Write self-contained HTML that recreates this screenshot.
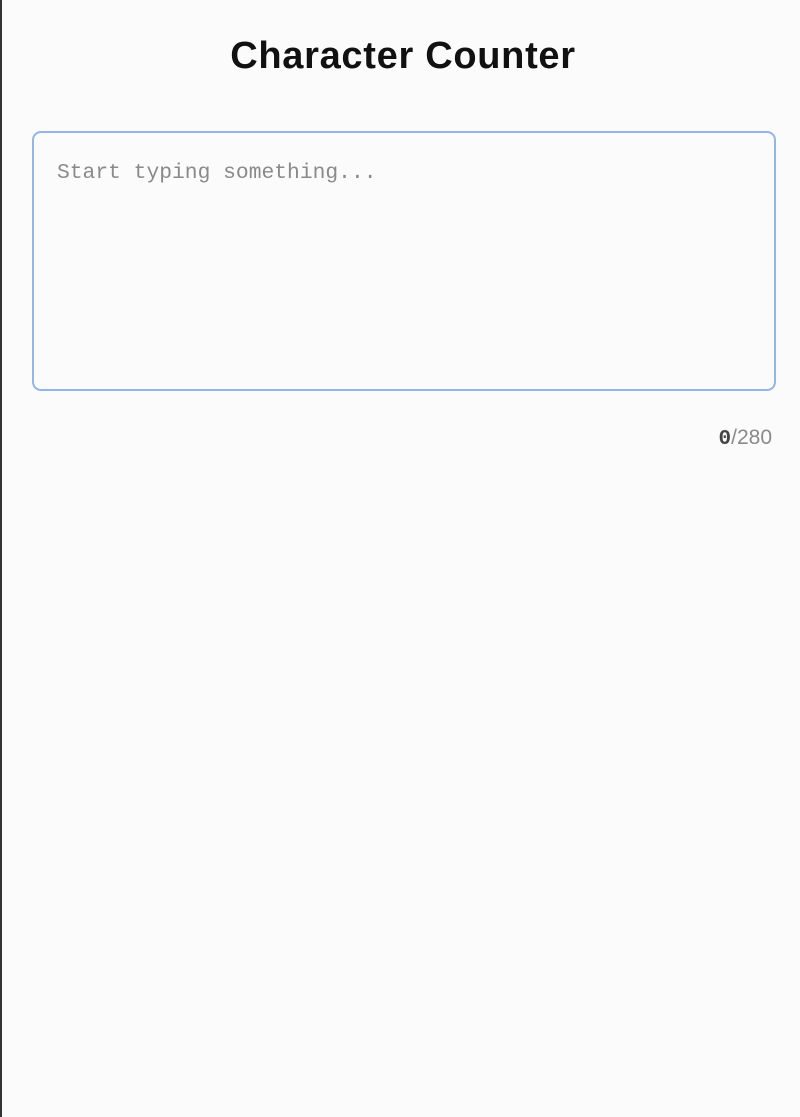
<!DOCTYPE html>
<html><head><style>
html,body{margin:0;padding:0;}
body{width:800px;height:1117px;background:#fbfbfb;position:relative;overflow:hidden;font-family:"Liberation Sans",sans-serif;}
.lb{position:absolute;left:0;top:0;width:2px;height:1117px;background:#333;}
h1{position:absolute;left:0;width:806px;top:34px;margin:0;text-align:center;font-size:38px;font-weight:bold;color:#111;letter-spacing:0.7px;line-height:44px;}
.ta{position:absolute;left:32px;top:131px;width:740px;height:256px;border:2px solid #93b5ea;border-radius:9px;background:#fbfbfb;}
.ph{position:absolute;left:23px;top:28px;font-family:"Liberation Mono",monospace;font-size:21.3px;color:#8a8a8a;}
.cnt{position:absolute;right:28px;top:426px;font-size:21px;color:#8a8a8a;}
.cnt b{font-family:"Liberation Mono",monospace;color:#444;}
</style></head><body>
<div class="lb"></div>
<h1>Character Counter</h1>
<div class="ta"><div class="ph">Start typing something...</div></div>
<div class="cnt"><b>0</b>/280</div>
</body></html>
